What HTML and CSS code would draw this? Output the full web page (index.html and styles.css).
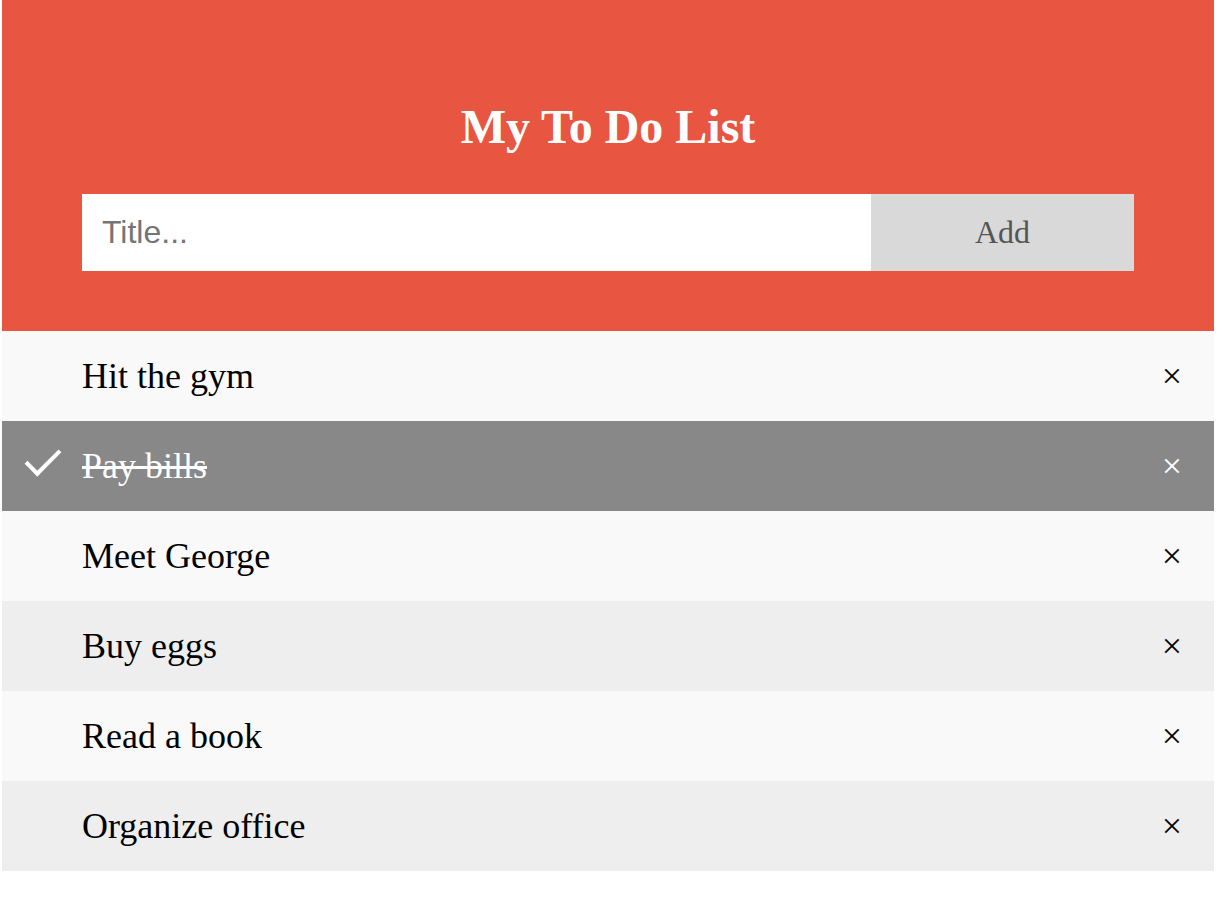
FILE: index.html
```html
<!DOCTYPE html>
<html>
<head>
<meta charset="utf-8">
<link rel="stylesheet" href="styles.css">
</head>
<body>
<div class="app">
  <div class="header">
    <h2 class="title">My To Do List</h2>
    <div class="form">
      <input class="field" type="text" placeholder="Title...">
      <span class="add-btn">Add</span>
    </div>
  </div>
  <ul class="list">
    <li class="item">Hit the gym<span class="close">×</span></li>
    <li class="item checked">Pay bills<span class="close">×</span></li>
    <li class="item">Meet George<span class="close">×</span></li>
    <li class="item">Buy eggs<span class="close">×</span></li>
    <li class="item">Read a book<span class="close">×</span></li>
    <li class="item">Organize office<span class="close">×</span></li>
  </ul>
</div>
</body>
</html>
```
FILE: styles.css
```css
* { box-sizing: border-box; }
body {
  margin: 0;
  background: #fff;
  font-family: "Liberation Serif", serif;
}
.app {
  margin-left: 2px;
  width: 1212px;
}
.header {
  background-color: #e85540;
  padding: 60px 80px;
  color: #fff;
  text-align: center;
}
.title {
  margin: 39px 0 40px;
  font-size: 48px;
  font-weight: bold;
  line-height: normal;
}
.form {
  display: flex;
}
.field {
  margin: 0;
  border: none;
  border-radius: 0;
  width: 75%;
  padding: 20px;
  font-size: 32px;
  font-family: "Liberation Sans", Arial, sans-serif;
  outline: none;
  line-height: normal;
}
.field::placeholder { color: #757575; }
.add-btn {
  padding: 20px;
  width: 25%;
  background: #d9d9d9;
  color: #555;
  text-align: center;
  font-size: 32px;
  line-height: normal;
}
.list {
  margin: 0;
  padding: 0;
}
.item {
  position: relative;
  padding: 24px 16px 24px 80px;
  list-style-type: none;
  background: #eee;
  font-size: 36px;
  line-height: normal;
  color: #000;
}
.item:nth-child(odd) { background: #f9f9f9; }
.item.checked {
  background: #888;
  color: #fff;
  text-decoration: line-through;
}
.item.checked::before {
  content: '';
  position: absolute;
  border-color: #fff;
  border-style: solid;
  border-width: 0 4px 4px 0;
  top: 20px;
  left: 32px;
  transform: rotate(45deg);
  height: 30px;
  width: 14px;
}
.close {
  position: absolute;
  right: 0;
  top: 0;
  padding: 24px 32px;
  text-decoration: none;
}
```
